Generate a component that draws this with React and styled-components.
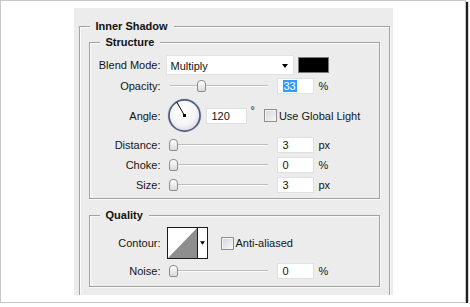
import React from "react";
import styled, { createGlobalStyle } from "styled-components";

const GlobalStyle = createGlobalStyle`
  html, body {
    margin: 0;
    background: #fff;
  }
  body {
    font-family: "Liberation Sans", Arial, sans-serif;
    font-size: 11px;
    color: #141414;
  }
`;

const Frame = styled.div`
  box-sizing: border-box;
  width: 466px;
  height: 303px;
  border: 1px solid #c6c6c6;
  box-shadow: 2px 2px 1px #1e1e1e;
  background: #fff;
  display: flex;
  justify-content: center;
  padding-top: 7px;
`;

const Panel = styled.div`
  box-sizing: border-box;
  width: 319px;
  height: 287px;
  background: #ececec;
  padding: 18px 3px 0 5px;
  display: flex;
  flex-direction: column;
  overflow: hidden;
`;

const Group = styled.section`
  position: relative;
  margin-top: ${({ $top }) => $top || 0}px;
  padding: ${({ $pad }) => $pad};
  border: 1px solid #a2a2a2;
  border-bottom: ${({ $open }) => ($open ? "none" : "1px solid #a2a2a2")};
  box-shadow: inset 1px 1px 0 #fafafa, 1px 1px 0 #fafafa;
  flex: ${({ $open }) => ($open ? 1 : "none")};
`;

const Title = styled.h3`
  position: absolute;
  top: -7px;
  left: 10px;
  margin: 0;
  padding: 0 6px;
  font-weight: bold;
  font-size: 11px;
  line-height: 13px;
  color: #111;
  background: #ececec;
`;

const Rows = styled.div`
  display: flex;
  flex-direction: column;
  gap: 4px;
`;

const Row = styled.div`
  display: flex;
  align-items: center;
  height: ${({ $h }) => $h || 16}px;
  margin-top: ${({ $mt }) => $mt || 0}px;
`;

const Label = styled.span`
  box-sizing: border-box;
  width: 76px;
  text-align: right;
  padding-right: 5px;
  flex: none;
  white-space: nowrap;
`;

const Select = styled.div`
  box-sizing: border-box;
  width: 128px;
  height: 20px;
  background: #fff;
  border: 1px solid #e2e2e2;
  display: flex;
  align-items: center;
  justify-content: space-between;
  padding: 1px 5px 0 4px;
`;

const Swatch = styled.div`
  box-sizing: border-box;
  width: 31px;
  height: 16px;
  margin-left: 4px;
  background: #000;
  border: 1px solid #7a7a7a;
`;

const Slider = styled.div`
  position: relative;
  width: 103px;
  height: 16px;
  flex: none;
`;

const Track = styled.div`
  position: absolute;
  left: 4px;
  right: 1px;
  top: 7px;
  height: 0;
  border-top: 1px solid #bdbdbd;
  border-bottom: 1px solid #fbfbfb;
`;

const Thumb = styled.div`
  position: absolute;
  top: 2px;
  box-sizing: border-box;
  width: 9px;
  height: 12px;
  border: 1px solid #8c8c8c;
  border-radius: 4px 4px 2px 2px;
  background: linear-gradient(#fefefe, #dadada);
`;

const Field = styled.div`
  box-sizing: border-box;
  width: ${({ $w }) => $w || 37}px;
  height: 16px;
  margin-left: ${({ $ml }) => $ml || 8}px;
  background: #fff;
  border: 1px solid #e0e0e0;
  padding: 0 0 0 5px;
  line-height: 15px;
  flex: none;
`;

const Selected = styled.span`
  background: #3399ff;
  color: #fff;
  padding: 0 1px;
`;

const Unit = styled.span`
  margin-left: ${({ $ml }) => $ml || 5}px;
  align-self: ${({ $top }) => ($top ? "flex-start" : "center")};
  margin-top: ${({ $top }) => ($top ? "6px" : "0")};
`;

const Check = styled.label`
  display: flex;
  align-items: center;
  gap: 2px;
  margin-left: ${({ $ml }) => $ml}px;
`;

const Box = styled.span`
  box-sizing: border-box;
  width: 13px;
  height: 13px;
  border: 1px solid #8e8f8f;
  background: linear-gradient(135deg, #d6d6d6, #f7f7f7);
  box-shadow: inset 1px 1px 0 #f4f4f4;
`;

const Dial = styled.svg`
  display: block;
  margin-left: 1px;
  flex: none;
`;

const Contour = styled.div`
  box-sizing: border-box;
  display: flex;
  width: 41px;
  height: 32px;
  margin-left: 1px;
  border: 1px solid #1c1c1c;
  background: #fff;
`;

const Preview = styled.svg`
  display: block;
  border-right: 1px solid #1c1c1c;
`;

const Arrow = styled.div`
  flex: 1;
  display: flex;
  align-items: center;
  justify-content: center;
`;

const DownArrow = ({ w = 6 }) => (
  <svg width={w} height={4} viewBox="0 0 6 4">
    <path d="M0 0h6L3 4z" fill="#000" />
  </svg>
);

const SliderRow = ({ label, value, pos, unit }) => (
  <Row>
    <Label>{label}</Label>
    <Slider>
      <Track />
      <Thumb style={{ left: 3 + pos * 0.85 }} />
    </Slider>
    <Field>{value}</Field>
    <Unit>{unit}</Unit>
  </Row>
);

const angle = (120 * Math.PI) / 180;

export default function App() {
  return (
    <>
      <GlobalStyle />
      <Frame>
        <Panel>
          <Group $open $pad="15px 9px 0 9px">
            <Title>Inner Shadow</Title>
            <Group $pad="12px 0 5px 0">
              <Title>Structure</Title>
              <Rows>
                <Row $h={20} style={{ marginBottom: -1 }}>
                  <Label>Blend Mode:</Label>
                  <Select>
                    <span>Multiply</span>
                    <DownArrow />
                  </Select>
                  <Swatch />
                </Row>
                <SliderRow label="Opacity:" value={<Selected>33</Selected>} pos={33} unit="%" />
                <Row $h={35}>
                  <Label>Angle:</Label>
                  <Dial width="35" height="35" viewBox="0 0 36 36">
                    <defs>
                      <radialGradient id="dialFill" cx="0.45" cy="0.4" r="0.6">
                        <stop offset="0" stopColor="#ffffff" />
                        <stop offset="0.7" stopColor="#f4f4f6" />
                        <stop offset="1" stopColor="#d9dbe2" />
                      </radialGradient>
                    </defs>
                    <circle cx="18" cy="18" r="17.2" fill="none" stroke="#d6dbe6" strokeWidth="1" />
                    <circle cx="18" cy="18" r="16" fill="url(#dialFill)" stroke="#4f5d7c" strokeWidth="1.8" />
                    <line
                      x1="18"
                      y1="18"
                      x2={18 + Math.cos(angle) * 16}
                      y2={18 - Math.sin(angle) * 16}
                      stroke="#000"
                      strokeWidth="1"
                    />
                    <rect x="16.5" y="16.5" width="3" height="3" fill="#000" />
                  </Dial>
                  <Field $w={41} $ml={4}>120</Field>
                  <Unit $top $ml={4}>°</Unit>
                  <Check $ml={9}>
                    <Box />
                    <span>Use Global Light</span>
                  </Check>
                </Row>
                <SliderRow label="Distance:" value="3" pos={0} unit="px" />
                <SliderRow label="Choke:" value="0" pos={0} unit="%" />
                <SliderRow label="Size:" value="3" pos={0} unit="px" />
              </Rows>
            </Group>
            <Group $top={16} $pad="11px 0 7px 0">
              <Title>Quality</Title>
              <Rows>
                <Row $h={32}>
                  <Label>Contour:</Label>
                  <Contour>
                    <Preview width="29" height="30" viewBox="0 0 29 30">
                      <rect width="29" height="30" fill="#fff" />
                      <path d="M0 30L29 0V30z" fill="#8e8e8e" />
                    </Preview>
                    <Arrow>
                      <DownArrow w={5} />
                    </Arrow>
                  </Contour>
                  <Check $ml={13}>
                    <Box />
                    <span>Anti-aliased</span>
                  </Check>
                </Row>
                <SliderRow label="Noise:" value="0" pos={0} unit="%" />
              </Rows>
            </Group>
          </Group>
        </Panel>
      </Frame>
    </>
  );
}
